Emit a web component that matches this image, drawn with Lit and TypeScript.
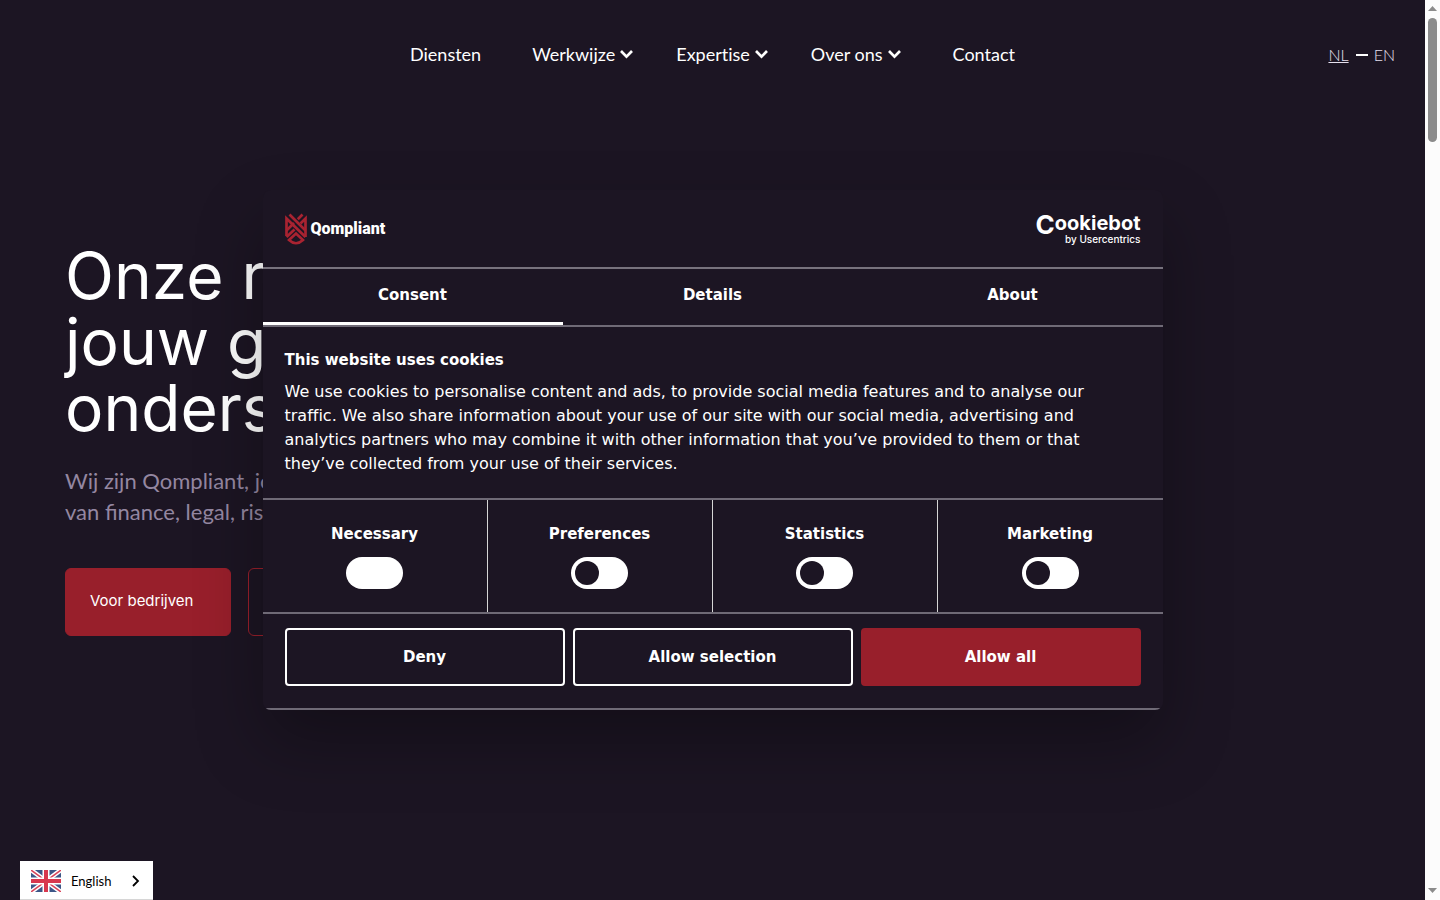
import { LitElement, html, css, svg, nothing } from "lit";
import { customElement, state } from "lit/decorators.js";

const chevron = svg`<path d="M1 2 L6.5 7.6 L12 2" fill="none" stroke="currentColor" stroke-width="2.7"/>`;

@customElement("site-header")
class SiteHeader extends LitElement {
  static styles = css`
    :host { display: block; }
    .bar { display: grid; grid-template-columns: 1fr auto 1fr; align-items: center; height: 110px; padding: 0 30px; }
    nav { grid-column: 2; display: flex; gap: 43px; padding-bottom: 2px; font-variant-ligatures: none; }
    a { color: #fff; text-decoration: none; }
    .item { display: flex; align-items: center; gap: 5px; font-size: 18px; line-height: 24px; }
    .first { padding-right: 8px; }
    .last { padding-left: 9px; }
    .chev { width: 13px; height: 10px; }
    .langs { justify-self: end; display: flex; align-items: center; gap: 6px; font-size: 16px; font-weight: 300; line-height: 24px; }
    .langs a { color: #e6e0ee; }
    .langs .on { text-decoration: underline; margin-right: 1px; }
    .dash { width: 12px; height: 2px; background: #fff; }
  `;
  render() {
    const items = [
      { label: "Diensten", cls: "first", menu: false },
      { label: "Werkwijze", cls: "", menu: true },
      { label: "Expertise", cls: "", menu: true },
      { label: "Over ons", cls: "", menu: true },
      { label: "Contact", cls: "last", menu: false },
    ];
    return html`<header class="bar">
      <nav>
        ${items.map((i) => html`<a href="#" class="item ${i.cls}">${i.label}${i.menu
          ? html`<svg class="chev" viewBox="0 0 13 10" aria-hidden="true">${chevron}</svg>` : nothing}</a>`)}
      </nav>
      <div class="langs"><a href="#" class="on">NL</a><span class="dash"></span><a href="#">EN</a></div>
    </header>`;
  }
}

@customElement("site-hero")
class SiteHero extends LitElement {
  static styles = css`
    :host { display: block; }
    .hero { padding: 133px 65px 0; }
    h1 { margin: 0 0 24px; font: 400 64px/66px Inter, "Liberation Sans", sans-serif; color: #fff; }
    p { margin: 0 0 41px; font-size: 22px; line-height: 31px; color: #9487a1; }
    .actions { display: flex; gap: 17px; }
    .btn { box-sizing: border-box; height: 68px; padding: 0 37px 2px 24px; display: flex; align-items: center;
      border: 1px solid #981f2b; border-radius: 6px; color: #fff; text-decoration: none;
      font: 400 15px/22px Inter, "Liberation Sans", sans-serif; }
    .solid { background: #981f2b; }
  `;
  render() {
    return html`<section class="hero">
      <h1>Onze rol:<br>jouw groei<br>ondersteunen</h1>
      <p>Wij zijn Qompliant, jouw partner<br>van finance, legal, risk en meer.</p>
      <div class="actions">
        <a href="#" class="btn solid">Voor bedrijven</a>
        <a href="#" class="btn">Voor experts</a>
      </div>
    </section>`;
  }
}

@customElement("cookie-dialog")
class CookieDialog extends LitElement {
  @state() tab = 0;
  static styles = css`
    :host { display: block; width: 900px; max-width: 100%; }
    .box { background: #1c1523; color: #fff; border-radius: 8px; overflow: hidden;
      font: 400 15px/24px "DejaVu Sans", sans-serif; }
    .shade { border-radius: 8px; box-shadow: 0 32px 68px rgba(0, 0, 0, 0.3); }
    .head { display: flex; justify-content: space-between; align-items: center; height: 77px; padding: 0 22px; border-bottom: 2px solid #77727d; }
    .brand { display: flex; align-items: center; gap: 4px; font: 900 16px/20px Roboto, sans-serif; }
    .mark { width: 22px; height: 32px; }
    .cookiebot { display: flex; flex-direction: column; align-items: flex-end; color: #fff; text-decoration: none; }
    .cb { display: flex; align-items: flex-start; height: 20px; font: 700 20px/20px Inter, sans-serif; }
    .big { font-size: 26px; line-height: 24px; }
    .by { font: 500 10px/12px Inter, sans-serif; }
    .tabs { display: grid; grid-template-columns: repeat(3, 1fr); height: 56px; border-bottom: 2px solid #6f6a76; }
    button { font: 700 15px/24px "DejaVu Sans", sans-serif; color: #fff; background: none; border: 0; padding: 0; cursor: pointer; }
    .tab { padding-bottom: 1px; border-bottom: 3px solid transparent; }
    .tab.on { border-bottom-color: #fff; }
    .body { padding: 21px 60px 22px 22px; }
    h2 { margin: 0 0 8px; font-size: 15px; line-height: 24px; }
    p { margin: 0; font-size: 16px; font-variant-ligatures: none; }
    .kinds { display: grid; grid-template-columns: repeat(4, 1fr); border-top: 2px solid #6f6a76; border-bottom: 2px solid #6f6a76; }
    .kind { display: flex; flex-direction: column; align-items: center; gap: 11px; padding: 22px 0 23px; font-weight: 700; border-right: 1px solid #d6d6d6; }
    .kind:last-child { border-right: 0; }
    input { appearance: none; margin: 0; width: 57px; height: 32px; border-radius: 16px; background: #fff; display: flex; align-items: center; padding: 0 4px; box-sizing: border-box; }
    input::before { content: ""; width: 24px; height: 24px; border-radius: 50%; background: #1c1523; }
    input:checked { justify-content: flex-end; }
    input:checked::before { background: #fff; }
    .actions { display: grid; grid-template-columns: repeat(3, 1fr); gap: 8px; padding: 14px 22px 22px; border-bottom: 2px solid #6f6a76; }
    .act { height: 58px; border: 2px solid #fff; border-radius: 4px; }
    .act.main { background: #981f2b; border-color: #981f2b; }
  `;
  render() {
    const tabs = ["Consent", "Details", "About"];
    const kinds = ["Necessary", "Preferences", "Statistics", "Marketing"];
    return html`<div class="shade"><div class="box" role="dialog" aria-label="This website uses cookies">
      <div class="head">
        <div class="brand">
          <svg class="mark" viewBox="0 0 22 32" aria-hidden="true" fill="none" stroke="#a92331" stroke-width="2.7">
            <path d="M4.5 1.5 L20.5 17.5"/>
            <path d="M17.5 1.5 L12.8 6.2 M9 10 L1.5 17.5"/>
            <path d="M1.5 23 V5.5 L20.5 24"/>
            <path d="M20.5 24 V5.5 L15.5 10.5"/>
            <path d="M1.5 24 L9.5 16.5"/>
            <path d="M4 27 L11 20.5 L18 27 Q11 33.5 4 27 Z" stroke-width="2.6"/>
          </svg>
          <span>Qompliant</span>
        </div>
        <a class="cookiebot" href="#"><span class="cb"><span class="big">C</span>ookiebot</span><span class="by">by Usercentrics</span></a>
      </div>
      <div class="tabs" role="tablist">
        ${tabs.map((t, i) => html`<button role="tab" class="tab ${i === this.tab ? "on" : ""}" @click=${() => (this.tab = i)}>${t}</button>`)}
      </div>
      <div class="body">
        <h2>This website uses cookies</h2>
        <p>We use cookies to personalise content and ads, to provide social media features and to analyse our traffic. We also share information about your use of our site with our social media, advertising and analytics partners who may combine it with other information that you’ve provided to them or that they’ve collected from your use of their services.</p>
      </div>
      <div class="kinds">
        ${kinds.map((k, i) => html`<div class="kind"><label for=${k}>${k}</label><input type="checkbox" id=${k} ?checked=${i === 0} ?disabled=${i === 0}></div>`)}
      </div>
      <div class="actions">
        <button class="act">Deny</button><button class="act">Allow selection</button><button class="act main">Allow all</button>
      </div>
    </div></div>`;
  }
}

@customElement("app-root")
class AppRoot extends LitElement {
  static styles = css`
    :host { display: flex; height: 100vh; overflow: hidden; background: #1c1523; font-family: Lato, "Liberation Sans", sans-serif; }
    .page { flex: 1; min-width: 0; position: relative; overflow: hidden; }
    .overlay { position: absolute; inset: 0; display: grid; place-items: center; }
    .lang { position: absolute; left: 20px; bottom: 0; display: flex; align-items: center; height: 39px; padding: 1px 13px 0 11px;
      border: 0; border-bottom: 1px solid #d6d6d6; background: #fff; color: #000; font: 400 13px/16px Lato, sans-serif; }
    .flag { width: 30px; height: 22px; margin-right: 10px; }
    .arrow { width: 9px; height: 12px; margin-left: 20px; }
    .scroll { width: 15px; background: #fcfcfc; display: flex; flex-direction: column; align-items: center; }
    .tri { width: 9px; height: 5px; margin: 6px 0 7px; }
    .thumb { width: 9px; height: 124px; border-radius: 5px; background: #8b8b8b; }
    .fill { flex: 1; }
  `;
  render() {
    return html`<div class="page">
        <site-header></site-header>
        <site-hero></site-hero>
        <div class="overlay"><cookie-dialog></cookie-dialog></div>
        <button class="lang">
          <svg class="flag" viewBox="0 0 30 22" aria-hidden="true">
            <rect width="30" height="22" fill="#3d5687"/>
            <path d="M0 0 L30 22 M30 0 L0 22" stroke="#fff" stroke-width="4.6"/>
            <path d="M0 0 L30 22 M30 0 L0 22" stroke="#d9445a" stroke-width="1.5"/>
            <path d="M15 0 V22 M0 11 H30" stroke="#fff" stroke-width="7"/>
            <path d="M15 0 V22 M0 11 H30" stroke="#d8374e" stroke-width="4"/>
          </svg>
          English
          <svg class="arrow" viewBox="0 0 9 12" aria-hidden="true"><path d="M2 1 L7 6 L2 11" fill="none" stroke="#000" stroke-width="1.8"/></svg>
        </button>
      </div>
      <div class="scroll" aria-hidden="true">
        <svg class="tri" viewBox="0 0 9 5"><path d="M0 5 L4.5 0 L9 5 Z" fill="#8b8b8b"/></svg>
        <div class="thumb"></div><div class="fill"></div>
        <svg class="tri" viewBox="0 0 9 5"><path d="M0 0 L4.5 5 L9 0 Z" fill="#8b8b8b"/></svg>
      </div>`;
  }
}
